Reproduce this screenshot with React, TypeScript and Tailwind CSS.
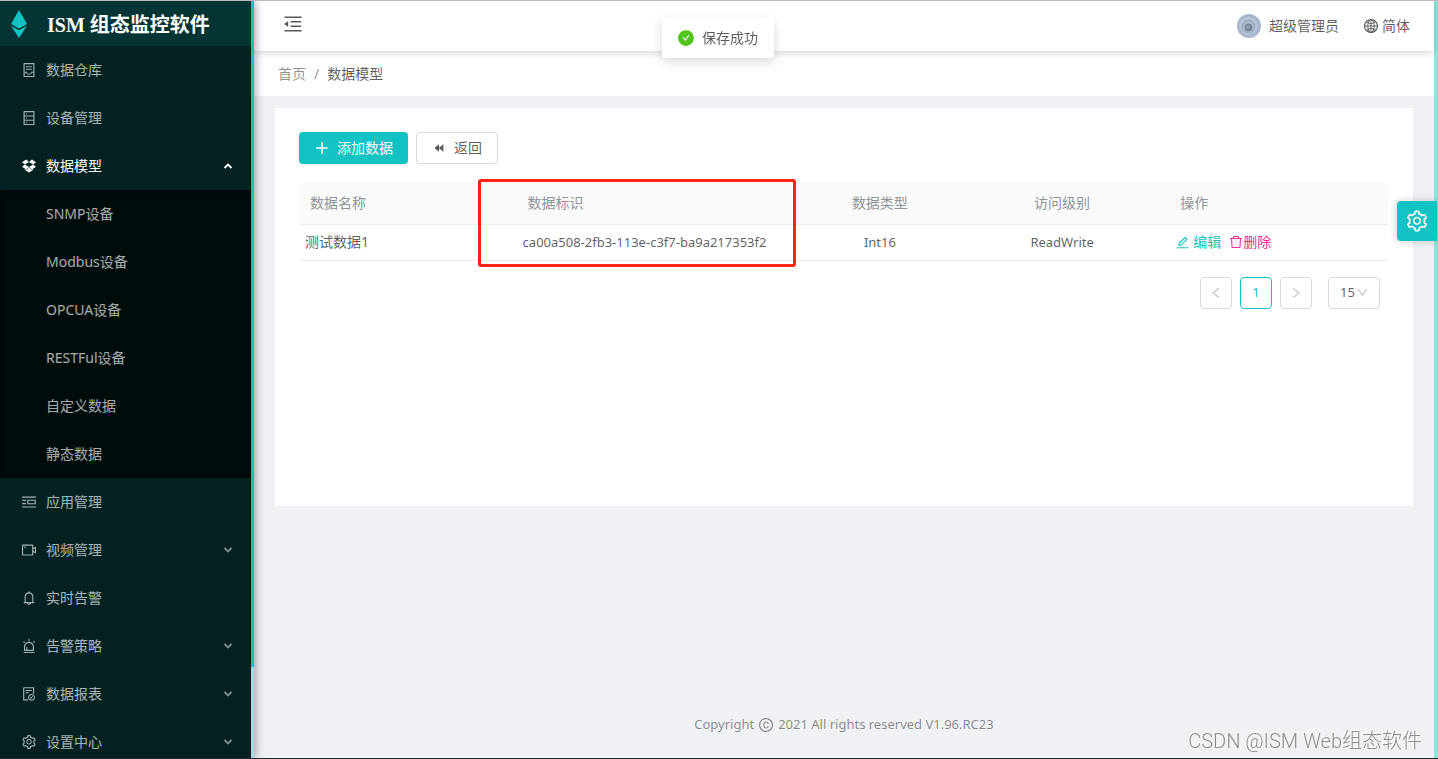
import { useState } from "react";
import type { IconType } from "react-icons";
import {
    AiFillBackward,
    AiFillCheckCircle,
    AiOutlineAlert,
    AiOutlineBell,
    AiOutlineContainer,
    AiOutlineCopyright,
    AiOutlineDatabase,
    AiOutlineDown,
    AiOutlineDropbox,
    AiOutlineEdit,
    AiOutlineFileDone,
    AiOutlineGlobal,
    AiOutlineLeft,
    AiOutlineMenuFold,
    AiOutlinePicRight,
    AiOutlinePlus,
    AiOutlineRight,
    AiOutlineSetting,
    AiOutlineVideoCamera,
} from "react-icons/ai";

interface MenuEntry {
    label: string;
    icon: IconType;
    expandable?: boolean;
    children?: string[];
}

interface DataRow {
    name: string;
    id: string;
    type: string;
    access: string;
}

const menu: MenuEntry[] = [
    { label: "数据仓库", icon: AiOutlineContainer },
    { label: "设备管理", icon: AiOutlineDatabase },
    {
        label: "数据模型",
        icon: AiOutlineDropbox,
        expandable: true,
        children: ["SNMP设备", "Modbus设备", "OPCUA设备", "RESTFul设备", "自定义数据", "静态数据"],
    },
    { label: "应用管理", icon: AiOutlinePicRight },
    { label: "视频管理", icon: AiOutlineVideoCamera, expandable: true },
    { label: "实时告警", icon: AiOutlineBell },
    { label: "告警策略", icon: AiOutlineAlert, expandable: true },
    { label: "数据报表", icon: AiOutlineFileDone, expandable: true },
    { label: "设置中心", icon: AiOutlineSetting, expandable: true },
];

const rows: DataRow[] = [
    { name: "测试数据1", id: "ca00a508-2fb3-113e-c3f7-ba9a217353f2", type: "Int16", access: "ReadWrite" },
];

const Arrow = ({ open }: { open: boolean }) => (
    <svg
        viewBox="0 0 10 10"
        className={`h-[10px] w-[10px] ${open ? "" : "opacity-75"}`}
        fill="none"
        stroke="currentColor"
        strokeWidth="1.8"
    >
        <path d={open ? "M1.5 7 5 3.5 8.5 7" : "M1.5 3 5 6.5 8.5 3"} />
    </svg>
);

const Logo = () => (
    <svg viewBox="0 0 16 28" className="h-7 w-4 shrink-0" fill="#13c2c2">
        <path d="M8 0 16 14 8 18.5 0 14Z" />
        <path d="M0 15.8 8 20.3 16 15.8 8 28Z" />
    </svg>
);

const Avatar = () => (
    <svg viewBox="0 0 24 24" className="h-6 w-6">
        <circle cx="12" cy="12" r="12" fill="#a9b7cf" />
        <circle cx="11.5" cy="12" r="9" fill="#b9c5d8" />
        <circle cx="11.5" cy="12.5" r="7" fill="#9dacc2" />
        <circle cx="11.5" cy="13" r="5.5" fill="#b0bfd0" />
        <circle cx="11.5" cy="13.5" r="4" fill="#74879b" />
        <circle cx="11" cy="13" r="2" fill="#8b9dae" />
    </svg>
);

const TrashIcon = () => (
    <svg viewBox="0 0 14 14" className="h-[14px] w-[14px]" fill="none" stroke="currentColor">
        <path d="M2.5 3.5 3 12.5H11L11.5 3.5Z" fill="#fff0f6" />
        <path d="M1 3.5H13M4.5 3.5V1.5H9.5V3.5" />
    </svg>
);

const Sidebar = () => {
    const [opened, setOpened] = useState("数据模型");

    return (
        <aside className="z-20 flex w-[254px] shrink-0 overflow-hidden bg-[#032121] shadow-[2px_0_8px_rgba(0,21,41,0.35)]">
            <div className="min-w-0 flex-1">
                <div className="flex h-[45px] items-center gap-5 bg-[#053434] pl-[11px]">
                    <Logo />
                    <h1 className="whitespace-nowrap pt-[3px] font-['Liberation_Serif','Noto_Sans_CJK_SC',serif] text-xl font-bold text-white">
                        ISM 组态监控软件
                    </h1>
                </div>
                <nav>
                    {menu.map((item) => {
                        const isOpen = opened === item.label && !!item.children;
                        const Icon = item.icon;
                        return (
                            <div key={item.label}>
                                <button
                                    type="button"
                                    onClick={() => item.expandable && setOpened(isOpen ? "" : item.label)}
                                    className={`flex h-12 w-full items-center gap-[9px] pl-[21px] pr-[18px] ${isOpen ? "text-white" : "text-white/65"}`}
                                >
                                    <Icon size={16} />
                                    <span className="flex-1 text-left">{item.label}</span>
                                    {item.expandable && <Arrow open={isOpen} />}
                                </button>
                                {isOpen && (
                                    <div className="bg-[#000c0c] shadow-[inset_0_2px_8px_rgba(0,0,0,0.45)]">
                                        {item.children?.map((child) => (
                                            <a key={child} href="#" className="flex h-12 items-center pl-[46px] text-white/65">
                                                {child}
                                            </a>
                                        ))}
                                    </div>
                                )}
                            </div>
                        );
                    })}
                </nav>
            </div>
            {/* scroll track and thumb */}
            <div className="w-[3px] bg-[#87e8de]">
                <div className="h-[88%] bg-[#13c2c2]" />
            </div>
        </aside>
    );
};

const Header = () => (
    <header className="relative z-10 flex h-[50px] shrink-0 items-center justify-between bg-white px-6 shadow-[0_1px_8px_rgba(0,21,41,0.2)]">
        <button type="button" aria-label="折叠菜单" className="pl-1 pb-1">
            <AiOutlineMenuFold size={22} />
        </button>
        <div className="flex items-center gap-6">
            <a href="#" className="flex items-center gap-2">
                <Avatar />
                超级管理员
            </a>
            <button type="button" className="flex items-center gap-[3px]">
                <AiOutlineGlobal size={16} />
                简体
            </button>
        </div>
    </header>
);

const DataTable = () => (
    <div className="relative mt-[19px] px-px">
        <table className="w-full table-fixed border-collapse">
            <colgroup>
                <col className="w-[20%]" />
                <col className="w-[26.5%]" />
                <col className="w-[13.6%]" />
                <col className="w-[19.9%]" />
                <col className="w-[20%]" />
            </colgroup>
            <thead>
                <tr className="h-[41px] border-b border-[#ebebeb] bg-[#fafafa] text-[#909399]">
                    <th className="rounded-tl px-[10px] text-left font-normal">数据名称</th>
                    <th className="px-[10px] text-left font-normal">数据标识</th>
                    <th className="px-[10px] font-normal">数据类型</th>
                    <th className="px-[10px] font-normal">访问级别</th>
                    <th className="rounded-tr px-[10px] text-left font-normal">操作</th>
                </tr>
            </thead>
            <tbody>
                {rows.map((row) => (
                    <tr key={row.id} className="h-9 border-b border-[#ebebeb]">
                        <td className="px-[5px]">{row.name}</td>
                        <td className="px-[5px] text-[13px]">{row.id}</td>
                        <td className="px-[5px] text-center text-[13px]">{row.type}</td>
                        <td className="px-[5px] text-center text-[13px]">{row.access}</td>
                        <td className="px-[5px]">
                            <div className="flex items-center gap-2">
                                <a href="#" className="flex items-center gap-[3px] text-[#13c2c2]">
                                    <AiOutlineEdit size={15} />
                                    编辑
                                </a>
                                <a href="#" className="flex items-center text-[#eb2f96]">
                                    <TrashIcon />
                                    删除
                                </a>
                            </div>
                        </td>
                    </tr>
                ))}
            </tbody>
        </table>
        {/* highlight around the id column */}
        <div className="pointer-events-none absolute -top-1 left-[16.4%] h-[88px] w-[29.2%] rounded-[3px] border-3 border-[#ff2314]" />
    </div>
);

const Pagination = () => (
    <div className="mt-4 flex justify-end gap-2 pr-[9px]">
        <button type="button" aria-label="上一页" className="flex h-8 w-8 items-center justify-center rounded border border-[#d9d9d9] text-black/25">
            <AiOutlineLeft size={14} />
        </button>
        <button type="button" className="h-8 w-8 rounded border border-[#13c2c2] text-[13px] text-[#13c2c2]">
            1
        </button>
        <button type="button" aria-label="下一页" className="flex h-8 w-8 items-center justify-center rounded border border-[#d9d9d9] text-black/25">
            <AiOutlineRight size={14} />
        </button>
        <div className="relative ml-2">
            <select aria-label="每页条数" className="h-8 w-[52px] appearance-none rounded border border-[#d9d9d9] bg-white pl-[11px] text-[13px]">
                <option>15</option>
                <option>30</option>
                <option>50</option>
            </select>
            <AiOutlineDown size={13} className="pointer-events-none absolute right-[11px] top-[9px] text-black/25" />
        </div>
    </div>
);

export default function App() {
    return (
        <div className="flex h-screen overflow-hidden border-t border-b border-t-[#bababa] border-b-[#1d2b2b] bg-[#f0f1f5] font-['Noto_Sans','Noto_Sans_CJK_SC',sans-serif] text-sm text-black/65">
            <Sidebar />
            <div className="flex min-w-0 flex-1 flex-col">
                <Header />
                <nav className="flex h-[45px] shrink-0 items-center gap-2 bg-white px-6">
                    <a href="#" className="text-black/45">首页</a>
                    <span className="text-black/45">/</span>
                    <span>数据模型</span>
                </nav>
                <main className="mx-[21px] mt-3 min-h-[398px] bg-white p-6">
                    <div className="flex gap-2">
                        <button type="button" className="flex h-8 items-center gap-[7px] rounded bg-[#13c2c2] px-[15px] text-white shadow-[0_2px_0_rgba(0,0,0,0.045)]">
                            <AiOutlinePlus size={16} strokeWidth={30} />
                            添加数据
                        </button>
                        <button type="button" className="flex h-8 items-center gap-2 rounded border border-[#d9d9d9] bg-white px-[15px] shadow-[0_2px_0_rgba(0,0,0,0.015)]">
                            <AiFillBackward size={14} />
                            返回
                        </button>
                    </div>
                    <DataTable />
                    <Pagination />
                </main>
                <footer className="mt-auto flex items-center justify-center gap-1 pb-6 text-[13px] text-black/45">
                    Copyright <AiOutlineCopyright size={16} /> 2021 All rights reserved V1.96.RC23
                </footer>
            </div>
            <div className="w-1 shrink-0 bg-[#87e8de]" />

            <div className="pointer-events-none fixed inset-x-0 top-[17px] z-30 flex justify-center pr-[2px]">
                <div role="status" className="flex h-[41px] items-center gap-[7px] rounded bg-white px-[15px] shadow-[0_4px_12px_rgba(0,0,0,0.15)]">
                    <AiFillCheckCircle size={18} className="text-[#52c41a]" />
                    <span className="whitespace-nowrap pr-px">保存成功</span>
                </div>
            </div>
            <button
                type="button"
                aria-label="主题设置"
                className="fixed right-px top-[201px] z-30 flex h-10 w-10 items-center justify-center rounded-l bg-[#13c2c2] text-white shadow-[0_0_8px_rgba(0,0,0,0.2)]"
            >
                <AiOutlineSetting size={24} />
            </button>
            <div className="fixed bottom-1 right-4 z-30 font-[Roboto,'Noto_Sans_CJK_SC',sans-serif] text-xl font-light text-[#8c8c8c] [text-shadow:-1px_-1px_0_#fff]">
                CSDN @ISM Web组态软件
            </div>
        </div>
    );
}
